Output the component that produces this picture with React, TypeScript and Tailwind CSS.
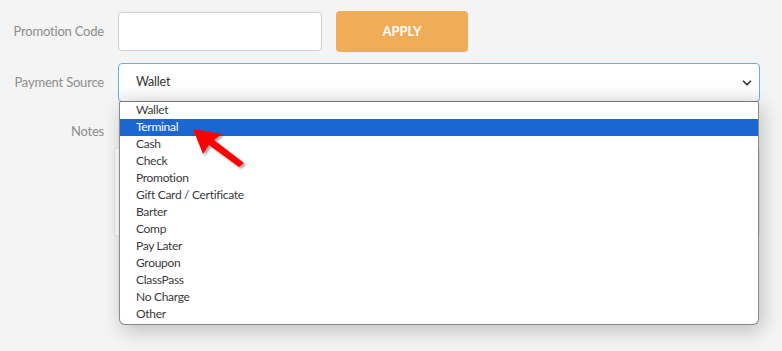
import { ChevronDown } from "lucide-react";

const sources = [
  "Wallet",
  "Terminal",
  "Cash",
  "Check",
  "Promotion",
  "Gift Card / Certificate",
  "Barter",
  "Comp",
  "Pay Later",
  "Groupon",
  "ClassPass",
  "No Charge",
  "Other",
];

const font = { fontFamily: 'Lato, "Open Sans", sans-serif' };

export default function App() {
  return (
    <div
      className="w-[782px] h-[351px] bg-[#f4f4f4] overflow-hidden text-[#555]"
      style={font}
    >
      <div className="flex flex-col gap-[11px] pt-[11px]">
        {/* promotion code */}
        <div className="flex items-center">
          <label className="w-[104px] text-right text-[13px] text-[#8d8d8d] tracking-[-0.2px]">
            Promotion Code
          </label>
          <input className="ml-[14px] w-[204px] h-[39px] bg-white border border-[#cfcfcf] rounded-[4px]" />
          <button className="ml-[14px] w-[132px] h-[41px] rounded-[4px] bg-[#f0ad57] text-white text-[13px] font-bold">
            APPLY
          </button>
        </div>

        {/* payment source */}
        <div className="flex items-center">
          <label className="w-[104px] text-right text-[13px] text-[#8d8d8d] tracking-[-0.2px]">
            Payment Source
          </label>
          <div className="relative ml-[14px] w-[642px]">
            <div className="h-[39px] flex items-center justify-between pl-[17px] pr-[5px] rounded-[4px] border border-[#62aee8] bg-gradient-to-b from-white from-60% to-[#f2f2f2] text-[12.5px] text-[#333] tracking-[-0.2px]">
              <span>Wallet</span>
              <ChevronDown size={14} strokeWidth={3} className="text-[#333]" />
            </div>

            {/* native option list */}
            <div className="absolute left-px top-[38px] w-[640px] h-[224px] z-10 bg-white border border-[#8a8a8a] border-t-[#777] rounded-b-[6px] rounded-t-[2px] shadow-[3px_6px_20px_rgba(0,0,0,0.22)]">
              {sources.map((s, i) => (
                <div
                  key={s}
                  className={
                    i === 1
                      ? "h-[17px] leading-[16px] pl-[16px] text-[12px] tracking-[-0.3px] bg-[#1b67d2] text-white"
                      : "h-[17px] leading-[16px] pl-[16px] text-[12px] tracking-[-0.3px] text-[#3a3a3a]"
                  }
                >
                  {s}
                </div>
              ))}
            </div>

            {/* red arrow annotation */}
            <svg
              className="absolute left-[72px] top-[62px] z-20"
              width="62"
              height="48"
              viewBox="0 0 62 48"
            >
              <defs>
                <filter id="sh" x="-20%" y="-20%" width="150%" height="150%">
                  <feDropShadow dx="2" dy="2" stdDeviation="1.2" floodColor="#000" floodOpacity="0.35" />
                </filter>
              </defs>
              <path
                d="M3 4 L32 9 L24 15 L54 38 L49 42 L19 20 L13 29 Z"
                fill="#f00"
                filter="url(#sh)"
              />
            </svg>
          </div>
        </div>

        {/* notes */}
        <div className="flex items-start">
          <label className="w-[104px] text-right text-[13px] text-[#8d8d8d] tracking-[-0.2px] pt-[9px]">
            Notes
          </label>
          <div className="ml-[10px] mt-[34px] w-[646px] h-[90px] bg-white border border-[#e2e2e2] rounded-[4px]" />
        </div>
      </div>
    </div>
  );
}
